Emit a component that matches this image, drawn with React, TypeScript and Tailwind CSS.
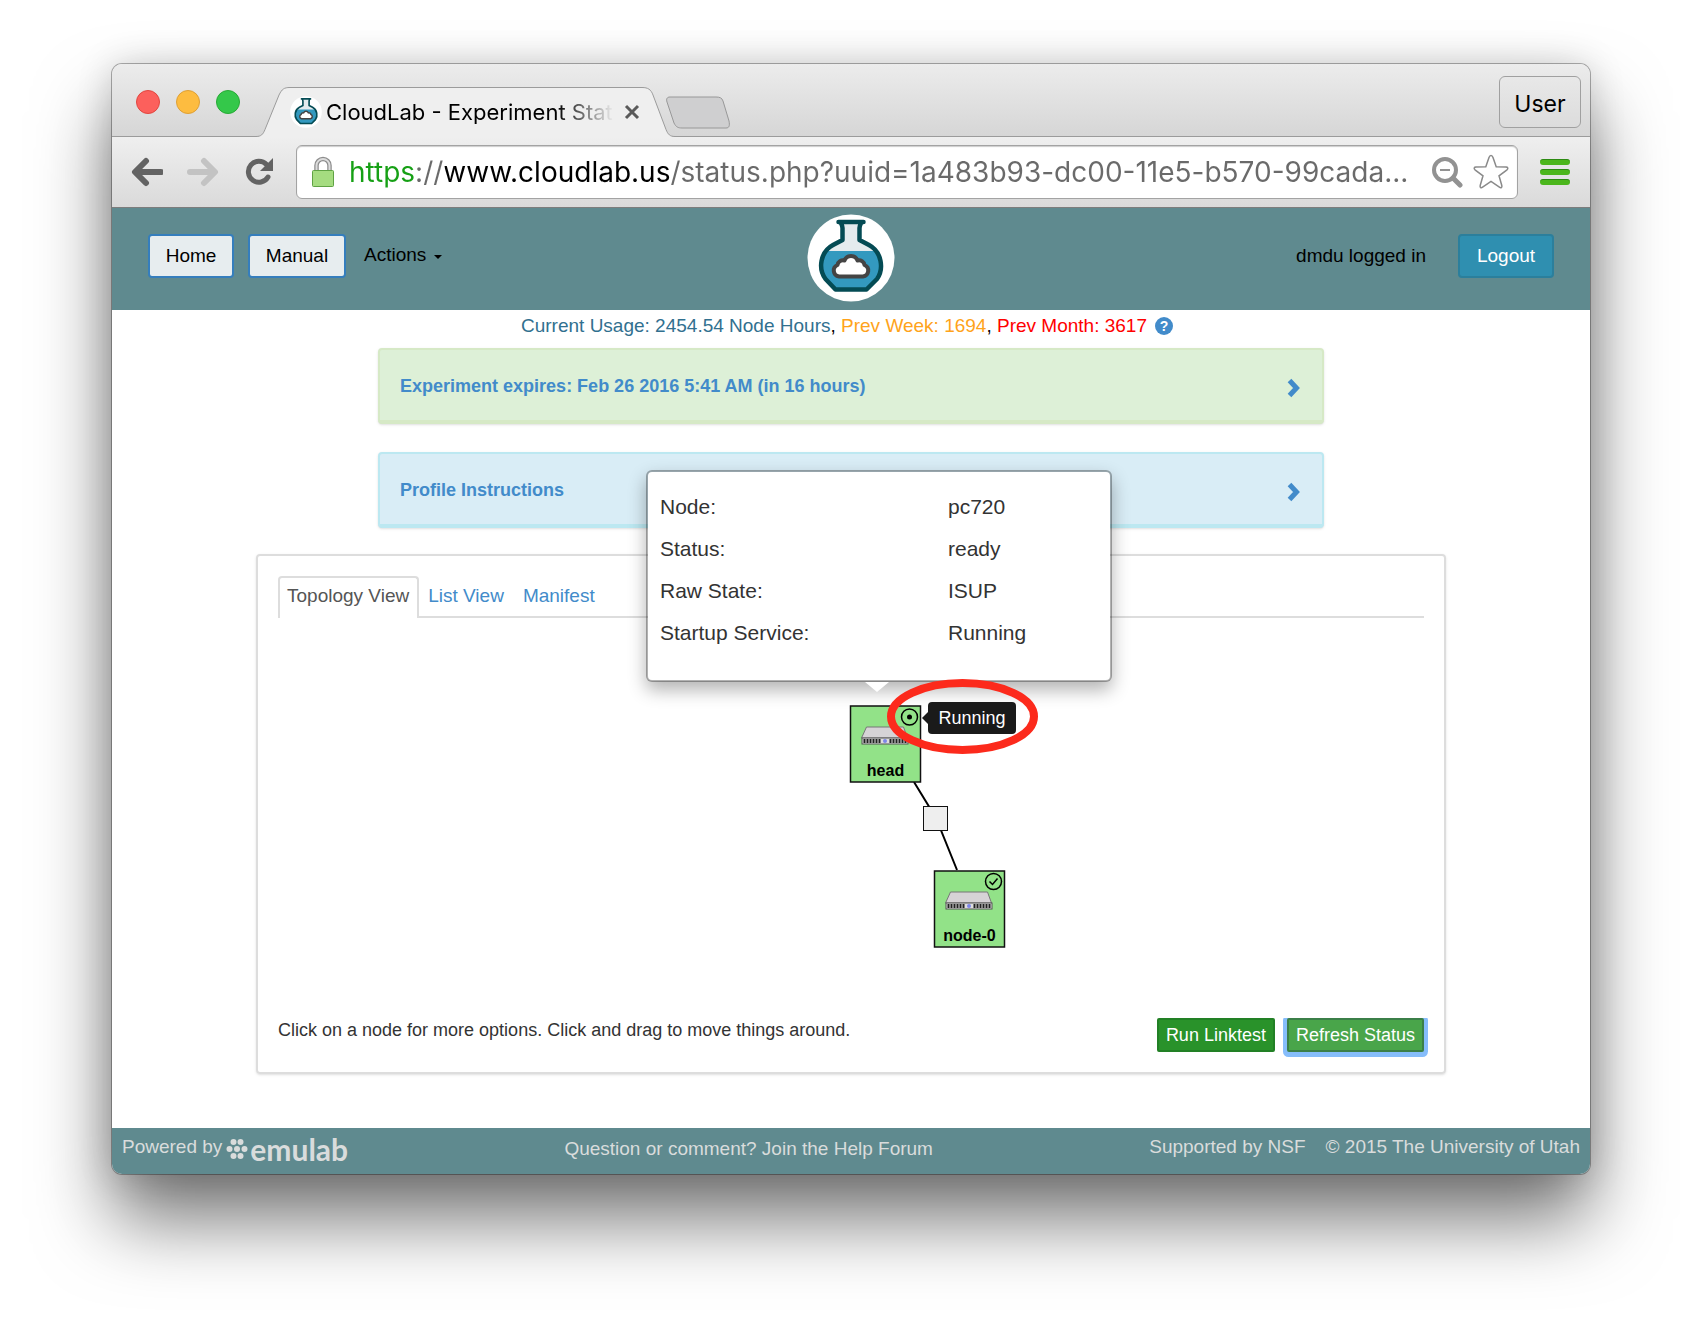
import { ReactNode, useState } from "react";

type NodeBoxProps = {
  x: number;
  y: number;
  name: string;
  children: ReactNode;
};

const nodeDetails = [
  { label: "Node:", value: "pc720" },
  { label: "Status:", value: "ready" },
  { label: "Raw State:", value: "ISUP" },
  { label: "Startup Service:", value: "Running" },
];

const tabs = ["Topology View", "List View", "Manifest"];

const Flask = ({ className }: { className: string }) => (
  <svg className={className} viewBox="0 0 88 88" aria-hidden="true">
    <circle cx="44" cy="44" r="43.5" fill="#fff" />
    <path
      d="M35 9h18v17.5c0 1.500 1 2.300 2 2.800A27 27 0 0 1 60.500 76.500h-33A27 27 0 0 1 33 29.300c1-.5 2-1.300 2-2.800z"
      fill="#e4ebee"
    />
    <path d="M18 37h52c7 13 2 29-10 38.500h-32C16 67 11 51 18 37z" fill="#3399bf" />
    <path
      d="M31.500 8h25M33.500 8c1 2 2 4 2 6v12L26 31C13 38 11 55 18.500 65l10 10.500h31L70 65c7-10 5-27-8-34l-9.500-5V14c0-2 1-4 2-6"
      fill="none"
      stroke="#044b54"
      strokeWidth="4.500"
      strokeLinejoin="round"
      strokeLinecap="round"
    />
    <path
      d="M32 62.500a6 6 0 0 1-1.500-11.500 5.500 5.500 0 0 1 7-4.500 7 7 0 0 1 13 0 5.500 5.500 0 0 1 7 4.500A6 6 0 0 1 56 62.500z"
      fill="#fff"
      stroke="#444"
      strokeWidth="4"
      strokeLinejoin="round"
    />
  </svg>
);

const ChevronRight = () => (
  <svg className="mt-1 mr-px h-5 w-4" viewBox="0 0 16 20" aria-hidden="true">
    <path d="M4.500 2.500 11.500 10l-7 7.500" fill="none" stroke="#428bca" strokeWidth="5" />
  </svg>
);

const BrowserChrome = () => {
  const [url, setUrl] = useState<string>(
    "https://www.cloudlab.us/status.php?uuid=1a483b93-dc00-11e5-b570-99cada..."
  );

  return (
    <div className="font-['Inter',sans-serif]">
      <div className="flex h-[73px] items-end border-b border-[#9b9b9b] bg-linear-to-b from-[#ececec] to-[#d6d6d6]">
        <div className="mb-[22px] ml-6 flex gap-4">
          <button aria-label="Close" className="size-6 rounded-full border border-[#e2463f] bg-[#fc605c]" />
          <button aria-label="Minimize" className="size-6 rounded-full border border-[#dfa035] bg-[#fdbc40]" />
          <button aria-label="Zoom" className="size-6 rounded-full border border-[#27aa35] bg-[#34c84a]" />
        </div>
        <div className="relative -mb-px ml-4 flex h-[50px] w-[420px] items-center pr-8 pl-[34px]">
          <svg className="absolute inset-0 size-full" viewBox="0 0 420 50" aria-hidden="true">
            <path
              d="M0 49.500c5 0 7-2 9-7L23 8c3-6 5-7.500 11-7.500h352c6 0 9 2 11 7.500l13 34.500c2 5 4 7 9 7V51H0z"
              fill="#efefef"
            />
            <path
              d="M0 49.500c5 0 7-2 9-7L23 8c3-6 5-7.500 11-7.500h352c6 0 9 2 11 7.500l13 34.500c2 5 4 7 9 7"
              fill="none"
              stroke="#9b9b9b"
            />
          </svg>
          <Flask className="relative size-8 shrink-0" />
          <span className="relative ml-1 min-w-0 flex-1 text-[22px] whitespace-nowrap [mask-image:linear-gradient(to_right,black_80%,transparent)]">
            CloudLab - Experiment Stat
          </span>
          <button aria-label="Close tab" className="relative ml-[6px] p-1">
            <svg className="size-4" viewBox="0 0 16 16" aria-hidden="true">
              <path d="m2 2 12 12M14 2 2 14" stroke="#5a5a5a" strokeWidth="3" />
            </svg>
          </button>
        </div>
        <button aria-label="New tab" className="mb-[6px] -ml-[11px]">
          <svg className="h-[34px] w-[66px]" viewBox="0 0 66 34" aria-hidden="true">
            <path
              d="M5 1h46c4 0 6 1 7 4l6 20c1 5 0 7-3 7H17c-4 0-6-1-8-5L2 6C1 3 2 1 5 1z"
              fill="#cfcfd0"
              stroke="#989898"
            />
          </svg>
        </button>
        <button className="mr-[9px] mb-2 ml-auto h-[52px] w-[82px] rounded-md border border-[#a0a0a0] bg-linear-to-b from-[#e8e8e8] to-[#dcdcdc] pt-1 text-[23px] text-black">
          User
        </button>
      </div>

      <div className="flex h-[71px] items-center border-b border-[#7d7d7d] bg-linear-to-b from-[#efefef] to-[#dadada] pr-5 pl-[19px]">
        <div className="flex w-[165px] gap-6">
          <button aria-label="Back">
            <svg className="h-8 w-8" viewBox="0 0 32 32" aria-hidden="true">
              <path d="M15 5 4 16l11 11M5 16h25" fill="none" stroke="#636363" strokeWidth="6" strokeLinejoin="round" strokeLinecap="round" />
            </svg>
          </button>
          <button aria-label="Forward">
            <svg className="h-8 w-8" viewBox="0 0 32 32" aria-hidden="true">
              <path d="M17 5l11 11-11 11M27 16H3" fill="none" stroke="#c3c3c3" strokeWidth="6" strokeLinejoin="round" strokeLinecap="round" />
            </svg>
          </button>
          <button aria-label="Reload">
            <svg className="h-8 w-8" viewBox="0 0 32 32" aria-hidden="true">
              <path d="M25 21A10.500 10.500 0 1 1 23.500 8.500" fill="none" stroke="#636363" strokeWidth="5" strokeLinecap="round" />
              <path d="M30 2v13H17z" fill="#636363" />
            </svg>
          </button>
        </div>
        <div className="flex h-[54px] flex-1 items-center rounded-md border border-[#a3a3a3] bg-white pr-2 pl-3 shadow-[inset_0_1px_1px_#ccc]">
          <svg className="h-[34px] w-[28px]" viewBox="0 0 28 34" aria-hidden="true">
            <path d="M7.500 17v-6.500a6.500 6.500 0 0 1 13 0V17" fill="none" stroke="#8d8d8d" strokeWidth="4.500" />
            <path d="M7.500 17v-6.500a6.500 6.500 0 0 1 13 0V17" fill="none" stroke="#dcdcdc" strokeWidth="2" />
            <rect x="3.500" y="15.500" width="21" height="16" rx="1" fill="#a5dc80" stroke="#5fa243" />
          </svg>
          <input
            aria-label="Address"
            value={url}
            onChange={(e) => setUrl(e.target.value)}
            className="ml-3 min-w-0 flex-1 bg-[linear-gradient(to_right,#16a015_68px,#6a6a6a_68px,#6a6a6a_96px,#000_96px,#000_322px,#6a6a6a_322px)] bg-clip-text text-[28px] text-transparent outline-none"
          />
          <svg className="size-8" viewBox="0 0 32 32" aria-hidden="true">
            <circle cx="14" cy="14" r="11" fill="none" stroke="#929292" strokeWidth="4" />
            <path d="m22 22 7 7" stroke="#929292" strokeWidth="5" strokeLinecap="round" />
            <path d="M9 14h10" stroke="#929292" strokeWidth="2" />
          </svg>
          <button aria-label="Bookmark" className="ml-[10px]">
            <svg className="size-9" viewBox="0 0 36 36" aria-hidden="true">
              <path
                d="M18 1.500c1 0 1.600.8 2 2l3.200 9.300 9.800.2c2 0 2.400 1.500 1 2.800l-8 6 2.800 9.700c.5 2-.8 2.800-2.400 1.700L18 27.500l-8.400 5.700c-1.600 1.100-2.900.3-2.400-1.700L10 21.800l-8-6c-1.400-1.300-1-2.800 1-2.800l9.800-.2L16 3.500c.4-1.200 1-2 2-2z"
                fill="#fff"
                stroke="#8a8a8a"
                strokeWidth="1.500"
              />
            </svg>
          </button>
        </div>
        <button aria-label="Menu" className="ml-[22px] flex flex-col gap-1">
          <span className="h-[6px] w-[30px] rounded-sm border-t border-[#2c8a12] bg-[#4bb61c]" />
          <span className="h-[6px] w-[30px] rounded-sm border-t border-[#2c8a12] bg-[#4bb61c]" />
          <span className="h-[6px] w-[30px] rounded-sm border-t border-[#2c8a12] bg-[#4bb61c]" />
        </button>
      </div>
    </div>
  );
};

const Header = () => (
  <header className="grid h-[102px] grid-cols-[1fr_auto_1fr] items-center bg-[#5f8a8f] px-9 pb-[2px] text-black">
    <nav className="-mt-1 flex items-center">
      <button className="h-11 w-[86px] rounded-sm border-2 border-[#357ebd] bg-[#e7edef]">Home</button>
      <button className="ml-[14px] h-11 w-[98px] rounded-sm border-2 border-[#357ebd] bg-[#e7edef]">
        Manual
      </button>
      <button className="ml-[18px] flex items-center gap-2 pb-[2px]">
        Actions
        <span className="mt-1 border-x-4 border-t-4 border-x-transparent border-t-black" />
      </button>
    </nav>
    <Flask className="size-[88px]" />
    <div className="-mt-1 flex items-center justify-end gap-8">
      <span>dmdu logged in</span>
      <button className="h-11 w-24 rounded-sm border-2 border-[#2b7f9c] bg-[#2f8fb0] text-white">Logout</button>
    </div>
  </header>
);

const NodeBox = ({ x, y, name, children }: NodeBoxProps) => (
  <g transform={`translate(${x} ${y})`}>
    <rect x="1" y="1" width="70" height="76" fill="#92e288" stroke="#111" strokeWidth="1.500" />
    <path d="M17 22h37l4 11H12z" fill="#d6d3d6" stroke="#777" />
    <rect x="12.500" y="33" width="46" height="6" fill="#ddd" stroke="#555" />
    <path d="M14 36h17M40 36h17" stroke="#222" strokeWidth="4" strokeDasharray="2 1" />
    <circle cx="35.500" cy="36" r="2" fill="#7d86e8" />
    <text x="36" y="71" textAnchor="middle" fontSize="16" fontWeight="700" fill="#000">
      {name}
    </text>
    {children}
  </g>
);

const Topology = () => (
  <div className="relative mx-auto h-[400px] w-[480px]">
    <svg className="absolute inset-0 size-full" viewBox="0 0 480 400" role="img" aria-label="Topology">
      <path d="M303 164 325 200 346 252" fill="none" stroke="#000" strokeWidth="2" />
      <rect x="312.500" y="188.500" width="24" height="24" fill="#eee" stroke="#111" />
      <NodeBox x={238.5} y={87} name="head">
        <circle cx="60" cy="12" r="8" fill="none" stroke="#000" strokeWidth="1.500" />
        <circle cx="60" cy="12" r="2.500" fill="#000" />
      </NodeBox>
      <NodeBox x={322.5} y={252} name="node-0">
        <circle cx="60" cy="11.500" r="8" fill="none" stroke="#000" strokeWidth="1.500" />
        <path d="m56 11.500 3 3 5-6" fill="none" stroke="#000" strokeWidth="1.500" />
      </NodeBox>
    </svg>

    {/* node details popover */}
    <div className="absolute -top-[148px] left-[35px] h-[212px] w-[466px] rounded-md border-2 border-black/30 bg-white bg-clip-padding px-3 pt-[14px] shadow-[0_8px_18px_rgba(0,0,0,0.3)]">
      <table className="w-full text-left text-[21px] leading-[42px] text-[#333]">
        <tbody>
          {nodeDetails.map((item) => (
            <tr key={item.label}>
              <th scope="row" className="w-[288px] p-0 font-normal">
                {item.label}
              </th>
              <td className="p-0">{item.value}</td>
            </tr>
          ))}
        </tbody>
      </table>
      <span className="absolute top-full left-1/2 mt-[2px] -ml-[14px] border-x-12 border-t-10 border-x-transparent border-t-white" />
    </div>

    {/* startup service tooltip */}
    <div role="tooltip" className="absolute top-[84px] left-[311px] flex items-center text-[18px] text-white">
      <span className="border-y-6 border-r-6 border-y-transparent border-r-[#1a1a1a]" />
      <span className="flex h-8 w-[88px] items-center justify-center rounded-sm bg-[#1a1a1a]">Running</span>
    </div>
    <svg className="absolute top-[60px] left-[275px] h-[78px] w-[154px]" viewBox="0 0 154 78" aria-hidden="true">
      <ellipse cx="76.500" cy="38.500" rx="71.500" ry="33.500" fill="none" stroke="#fc2a1c" strokeWidth="8" />
    </svg>
  </div>
);

const App = () => {
  const [activeTab, setActiveTab] = useState<number>(0);

  return (
    <div className="bg-white px-28 pt-16 pb-40 font-['Liberation_Sans',Arial,sans-serif] text-[19px] leading-6">
      <div className="overflow-hidden rounded-[10px] bg-white shadow-[0_0_0_1px_rgba(0,0,0,0.3),0_0_36px_rgba(0,0,0,0.16),0_46px_76px_rgba(0,0,0,0.54)]">
        <BrowserChrome />
        <Header />

        <main className="pb-[54px]">
          <p className="flex items-center justify-center pt-1 pr-2">
            <span className="text-[#31708f]">Current Usage: 2454.54 Node Hours</span>
            <span>,&nbsp;</span>
            <span className="text-[#ffa31a]">Prev Week: 1694</span>
            <span>,&nbsp;</span>
            <span className="text-[#f00]">Prev Month: 3617</span>
            <button
              aria-label="Usage help"
              className="ml-2 size-[18px] rounded-full bg-[#428bca] text-[14px] leading-[18px] font-bold text-white"
            >
              ?
            </button>
          </p>

          <div className="mx-auto mt-[10px] flex w-16/25 flex-col gap-7 text-[18px] font-bold text-[#428bca]">
            <button className="flex h-[76px] items-center justify-between rounded-sm border-2 border-b-4 border-[#d6e9c6] bg-[#ddf0d7] px-5 pt-[2px] text-left shadow-sm">
              Experiment expires: Feb 26 2016 5:41 AM (in 16 hours)
              <ChevronRight />
            </button>
            <button className="flex h-[76px] items-center justify-between rounded-sm border-2 border-b-4 border-[#bce8f1] bg-[#d9edf6] px-5 pt-[2px] text-left shadow-sm">
              Profile Instructions
              <ChevronRight />
            </button>
          </div>

          <section className="mx-36 mt-[26px] rounded-sm border-2 border-[#ddd] p-5 shadow-sm">
            <div role="tablist" className="flex h-[42px] border-b-2 border-[#ddd]">
              {tabs.map((tab, i) => (
                <button
                  key={tab}
                  role="tab"
                  aria-selected={i === activeTab}
                  onClick={() => setActiveTab(i)}
                  className={`h-[42px] rounded-t-sm border-2 border-b-0 pr-2 pb-1 pl-[7px] ${
                    i === activeTab
                      ? "border-[#ddd] bg-white text-[#555]"
                      : "border-transparent text-[#428bca]"
                  }`}
                >
                  {tab}
                </button>
              ))}
            </div>

            <Topology />

            <div className="flex items-end justify-between text-[18px]">
              <p className="mb-[10px] text-[#333]">
                Click on a node for more options. Click and drag to move things around.
              </p>
              <div className="flex gap-3 text-white">
                <button className="h-[34px] rounded-xs border-2 border-[#228025] bg-[#29922a] px-[7px]">
                  Run Linktest
                </button>
                <button className="h-[34px] rounded-xs border-2 border-[#3b7f48] bg-[#49a54a] px-[7px] shadow-[0_1px_0_4px_#86bdfb] [clip-path:inset(0_-6px_-6px_-6px)]">
                  Refresh Status
                </button>
              </div>
            </div>
          </section>
        </main>

        <footer className="flex h-[46px] items-center justify-between bg-[#5f8a8f] px-[10px] pb-1 text-[#d9dcdc]">
          <div className="flex items-center">
            <span className="-mt-1">Powered by</span>
            <a href="#emulab" className="ml-1 flex items-center font-['Lato',sans-serif] text-[30px] font-bold">
              <svg className="mr-[2px] size-[22px]" viewBox="0 0 22 22" fill="#d9dcdc" aria-hidden="true">
                <circle cx="11" cy="11" r="3" />
                <circle cx="7.500" cy="4" r="3" />
                <circle cx="14.500" cy="4" r="3" />
                <circle cx="3.500" cy="11" r="3" />
                <circle cx="18.500" cy="11" r="3" />
                <circle cx="7.500" cy="18" r="3" />
                <circle cx="14.500" cy="18" r="3" />
              </svg>
              emulab
            </a>
          </div>
          <a href="#forum">Question or comment? Join the Help Forum</a>
          <div className="-mt-1 flex justify-end gap-5">
            <a href="#nsf">Supported by NSF</a>
            <a href="#utah">© 2015 The University of Utah</a>
          </div>
        </footer>
      </div>
    </div>
  );
};

export default App;
